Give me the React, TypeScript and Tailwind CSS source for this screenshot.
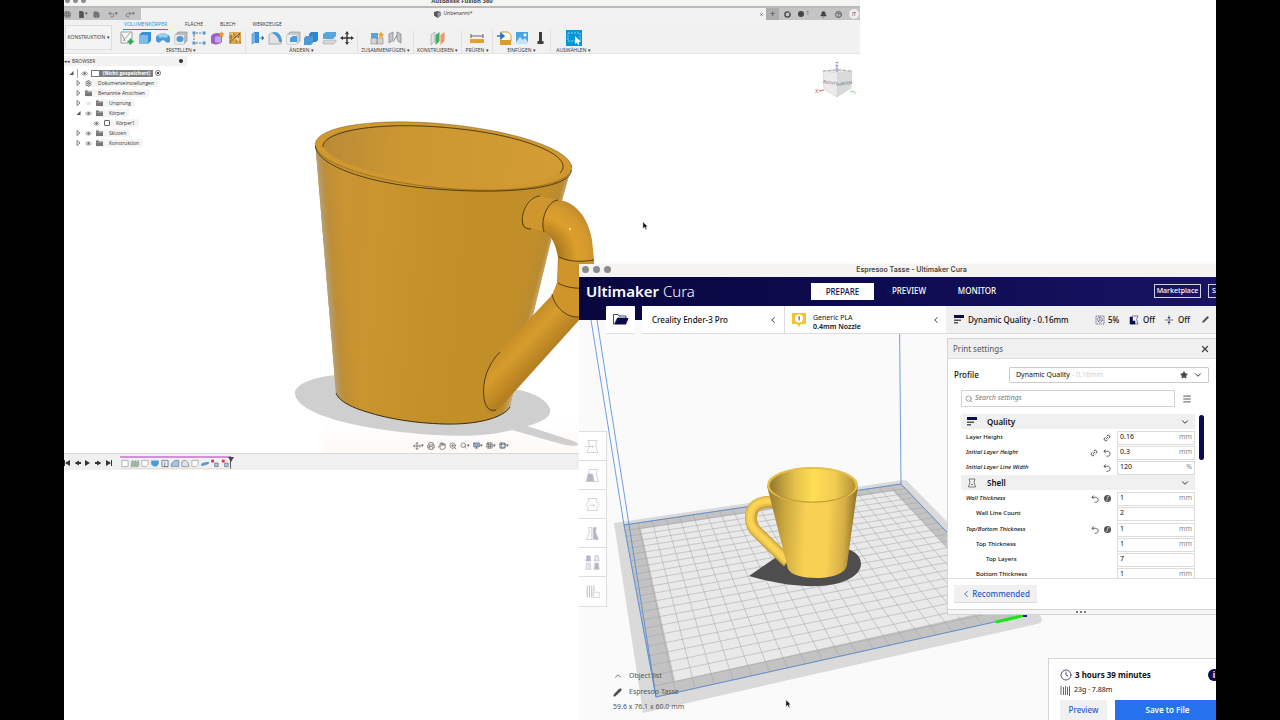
import type { FC, ReactNode } from 'react';
import {
    Bell, ChevronDown, ChevronLeft, ChevronUp, Clock, Grid3x3, Hand, HelpCircle, Link2, Menu, Monitor, Move,
    Pencil, Printer, Redo2, Save, Search, Settings, Star, Undo2, X, ZoomIn, Table2,
} from 'lucide-react';

/* ---------- shared ---------- */

const Cursor: FC = () => (
    <svg viewBox="0 0 8 11" className="w-[7px] h-[10px]">
        <path d="M1 .5v8l2-1.6 1.4 3 1.4-.7-1.4-2.8h2.4z" fill="#111" stroke="#fff" strokeWidth=".6" />
    </svg>
);

const TrafficLights: FC<{ size: string }> = ({ size }) => (
    <>
        <span className={`${size} rounded-full bg-[#8b8b8b]`} />
        <span className={`${size} rounded-full bg-[#8b8b8b]`} />
        <span className={`${size} rounded-full bg-[#8b8b8b]`} />
    </>
);

/* ---------- Fusion 360 ---------- */

const ToolIcon: FC<{ children: ReactNode; label: string }> = ({ children, label }) => (
    <button aria-label={label} className="w-[18px] h-[16px] flex items-center justify-center">
        <svg viewBox="0 0 16 16" className="w-[16px] h-[16px]" fill="none">{children}</svg>
    </button>
);

interface ToolGroup {
    label: string;
    width: string;
    tools: { name: string; art: ReactNode }[];
}

const toolGroups: ToolGroup[] = [
    {
        label: 'ERSTELLEN',
        width: 'w-[129px]',
        tools: [
            { name: 'Skizze', art: <><path d="M2 2h11v11H2z" fill="#f7f7f7" stroke="#888" strokeWidth=".8" /><path d="M4 11l7-8M3 4l3 7" stroke="#777" strokeWidth=".7" /><path d="M11.500 8.500v6M8.500 11.500h6" stroke="#22a84a" strokeWidth="2" /></> },
            { name: 'Extrusion', art: <><path d="M2 5l3-3h9v9l-3 3H2z" fill="#3d8fd1" /><path d="M2 5h9v9H2z" fill="#7fbbe8" /></> },
            { name: 'Drehen', art: <><path d="M1 8c0-6 14-6 14 0v4c-2 1-4 1-5-1-1-1-3-1-4 0-1 2-3 2-5 0z" fill="#4c9bd8" /><path d="M2 5c3-2 9-2 12 0l-3 3c-2-1-4-1-6 0z" fill="#9accee" /></> },
            { name: 'Bohrung', art: <><path d="M2 5l3-3h9v9l-3 3H2z" fill="#b9bdc2" stroke="#888" strokeWidth=".6" /><path d="M2 5h9v9H2z" fill="#e5e7e9" /><ellipse cx="7" cy="9" rx="3.500" ry="3" fill="#4c9bd8" /></> },
            { name: 'Muster', art: <><path d="M3 5v6m2 2h6M5 3h6" stroke="#555" strokeWidth=".8" strokeDasharray="2 1" /><path d="M1.500 1.500h3v3h-3zM11.500 1.500h3v3h-3zM1.500 11.500h3v3h-3zM11.500 11.500h3v3h-3z" fill="#4c9bd8" /></> },
            { name: 'Form', art: <><path d="M2 6c2-3 6-4 11-2v8c-3 3-8 3-11 1z" fill="#9b62d0" /><path d="M6 7c2-1 4-1 6 0v5c-2 1-4 1-6 0z" fill="#c7a3e8" /><path d="M12.500 1l1 2 2 .5-1.500 1.500.5 2-2-1-2 1 .5-2L9.500 3.500l2-.5z" fill="#f39a2b" /></> },
            { name: 'Netz', art: <><path d="M2 2h12v12H2z" fill="#dba954" /><path d="M2 8l4-5 3 4 4-4M3 13l5-6 6 6M6 3l-3 9M13 3l-4 10" stroke="#7a5118" strokeWidth=".7" /><path d="M8 8h4v4zM3 3h3v3z" fill="#f3d79d" /></> },
        ],
    },
    {
        label: 'ÄNDERN',
        width: 'w-[112px]',
        tools: [
            { name: 'Drücken/Ziehen', art: <><path d="M3 4l3-2v10l-3 2z" fill="#7fbbe8" stroke="#3d8fd1" strokeWidth=".6" /><path d="M6 2h4v11H6z" fill="#3d8fd1" /><path d="M10 8h3m0-2l2 2-2 2z" stroke="#3d8fd1" fill="#333" strokeWidth=".7" /></> },
            { name: 'Abrundung', art: <><path d="M2 14V5c3-4 9-3 12 5v4z" fill="#e1e3e5" stroke="#888" strokeWidth=".6" /><path d="M5 3c5-3 10 2 10 9h-3c0-4-3-7-7-9z" fill="#4c9bd8" /></> },
            { name: 'Schale', art: <><path d="M2 5l3-3h10v9l-3 3H2z" fill="#c8cbce" stroke="#888" strokeWidth=".6" /><path d="M2 5h10v9H2z" fill="#eceeef" /><path d="M5 8l3-2h4v6H5z" fill="#4c9bd8" /></> },
            { name: 'Kombinieren', art: <><path d="M6 4l2-2h7v8l-2 2H6z" fill="#2f86cc" /><path d="M1 8l2-2h7v7l-2 2H1z" fill="#4c9bd8" /></> },
            { name: 'Körper trennen', art: <><path d="M2 4l3-2h10v4l-3 3H2z" fill="#58a5de" /><path d="M2 11l3-1h10v2l-3 2H2z" fill="#d5d8da" stroke="#999" strokeWidth=".5" /></> },
            { name: 'Verschieben', art: <path d="M8 1l2 3H8.700v3.300H12V6l3 2-3 2V8.700H8.700V12H10l-2 3-2-3h1.300V8.700H4V10L1 8l3-2v1.300h3.300V4H6z" fill="#333" /> },
        ],
    },
    {
        label: 'ZUSAMMENFÜGEN',
        width: 'w-[56px]',
        tools: [
            { name: 'Neue Komponente', art: <><path d="M2 3h7v5H2z" fill="#58a5de" /><path d="M2 8h6v6H2zM8 8h6v6H8z" fill="#cfd3d6" stroke="#888" strokeWidth=".6" /><path d="M12 1l1 2.500 2.500.5-2 1.500.5 2.500-2-1-2 1 .5-2.500-2-1.500 2.500-.5z" fill="#f0a92c" /></> },
            { name: 'Verbindung', art: <><path d="M2 13V4l4-2v7l-1 2zM14 13V4l-4-2v7l1 2z" fill="#c3c7ca" stroke="#85898c" strokeWidth=".8" /><path d="M6 12l4-7" stroke="#777" strokeWidth=".8" /></> },
        ],
    },
    {
        label: 'KONSTRUIEREN',
        width: 'w-[48px]',
        tools: [{ name: 'Ebene', art: <><path d="M1 5l4-3v9l-4 4z" fill="#dfe2e3" stroke="#888" strokeWidth=".5" /><path d="M5.500 5l4-3v9l-4 4z" fill="#3fae62" /><path d="M10.500 5l4-3v9l-4 4z" fill="#ef9467" /></> }],
    },
    {
        label: 'PRÜFEN',
        width: 'w-[31px]',
        tools: [{ name: 'Messen', art: <><path d="M2 4v4M14 4v4M2 6h12" stroke="#444" strokeWidth=".8" /><path d="M1 9h14v4H1z" fill="#e3a22f" /></> }],
    },
    {
        label: 'EINFÜGEN',
        width: 'w-[58px]',
        tools: [
            { name: 'Ableiten', art: <><path d="M5 2h7l3 3v6H5z" fill="#fff" stroke="#d99b2c" /><path d="M4 10h11v5H4z" fill="#d99b2c" /><path d="M1 6h6M5 3.500L8 6 5 8.500z" stroke="#2678c0" fill="#2678c0" strokeWidth="1.500" /></> },
            { name: 'Bild', art: <><path d="M2 2h12v12H2z" fill="#4ba3e0" /><path d="M2 12l4-5 3 3 2-2 3 4v2H2z" fill="#c6e3f6" /><circle cx="11" cy="5" r="1.500" fill="#fff" /></> },
            { name: 'Schraube', art: <path d="M7 2h3v9h1.500v3h-6v-3H7z" fill="#3d3d3d" /> },
        ],
    },
    {
        label: 'AUSWÄHLEN',
        width: 'w-[45px]',
        tools: [{ name: 'Auswählen', art: <><path d="M0 0h16v16H0z" fill="#0696d7" /><path d="M2 3h12v8H2z" stroke="#a7e0f7" strokeDasharray="2 1" strokeWidth=".8" /><path d="M9 6v8l2-1.500 1 2.500 1.500-.7-1-2.300h2.500z" fill="#fff" /></> }],
    },
];

const Eye: FC<{ off?: boolean }> = ({ off }) => (
    <svg viewBox="0 0 12 8" className={`w-[7px] h-[5px] ${off ? 'opacity-20' : ''}`} fill="none">
        <path d="M.5 4C3 .500 9 .500 11.500 4 9 7.500 3 7.500.500 4z" stroke="#666" />
        <circle cx="6" cy="4" r="2" fill="#666" />
    </svg>
);

const Folder: FC = () => (
    <svg viewBox="0 0 14 12" className="w-[7px] h-[6px]">
        <path d="M0 1h5l1 2h8v9H0z" fill="#777" />
        <path d="M1 5h12" stroke="#bbb" />
    </svg>
);

const Arrow: FC<{ open?: boolean }> = ({ open }) => (
    <svg viewBox="0 0 10 10" className="w-[5px] h-[6px]">
        {open
            ? <path d="M9 1v8H1z" fill="#555" />
            : <path d="M2 0l6 5-6 5z" fill="#fff" stroke="#555" strokeWidth="1.500" />}
    </svg>
);

const treeItems = [
    { label: 'Dokumenteinstellungen', icon: 'gear' },
    { label: 'Benannte Ansichten', icon: 'folder' },
    { label: 'Ursprung', icon: 'folder', eye: 'off' },
    { label: 'Körper', icon: 'folder', eye: 'on', open: true },
    { label: 'Körper1', icon: 'body', eye: 'on', child: true },
    { label: 'Skizzen', icon: 'folder', eye: 'on' },
    { label: 'Konstruktion', icon: 'folder', eye: 'on' },
];

const BrowserTree: FC = () => (
    <div className="relative pt-[2px] text-[5px] leading-[10px] text-[#333]">
        <div className="w-[123px] h-[10px] bg-[#f2f2f2] flex items-center justify-between pr-1">
            <span className="flex items-center gap-[2px]"><span>◂◂</span>BROWSER</span>
            <span className="size-[4px] rounded-full bg-[#333]" />
        </div>
        <ul className="pt-[2px]">
            <li className="h-[10px] pl-[5px] flex items-center gap-[3px]">
                <Arrow open />
                <span className="w-px h-[9px] bg-[#d58bd8]" />
                <Eye />
                <span className="h-[7px] flex">
                    <span className="w-[9px] h-[7px] bg-white border border-[#777]" />
                    <b className="w-[53px] bg-[#7f7f7f] text-white text-center leading-[7px] whitespace-nowrap">(Nicht gespeichert)</b>
                    <span className="ml-[2px] size-[6px] rounded-full border border-[#777] bg-[radial-gradient(#444_30%,white_40%)]" />
                </span>
            </li>
            {treeItems.map((item) => (
                <li key={item.label} className={`h-[10px] flex items-center gap-[4px] ${item.child ? 'pl-[29px]' : 'pl-[12px]'}`}>
                    {!item.child && <Arrow open={item.open} />}
                    {item.eye && <Eye off={item.eye === 'off'} />}
                    <span className="bg-[#f5f5f5] h-[8px] pr-[4px] flex items-center gap-[6px]">
                        {item.icon === 'folder' && <Folder />}
                        {item.icon === 'gear' && <Settings className="size-[7px]" />}
                        {item.icon === 'body' && <span className="size-[6px] rounded-[1px] border border-[#666] bg-white" />}
                        {item.label}
                    </span>
                </li>
            ))}
        </ul>
    </div>
);

const MUG_BODY = 'M315.500 146L336 393c2 7 14 14 31 19 22 7 48 11 76 12 34 1 60-6 67-17l3-14 20-78 20-83 19-67z';

const BigMug: FC = () => (
    <svg viewBox="64 54 796 399" className="absolute left-0 top-0 w-[796px] h-[399px]" fill="none">
        <defs>
            <linearGradient id="mugBody" x1="325" x2="562" y1="280" y2="300" gradientUnits="userSpaceOnUse">
                <stop offset="0" stopColor="#c99432" />
                <stop offset=".2" stopColor="#ca952f" />
                <stop offset=".5" stopColor="#c28f28" />
                <stop offset="1" stopColor="#c08d29" />
            </linearGradient>
            {/* light falling off along the two slanted sides */}
            <linearGradient id="mugLeft" x1="326" x2="350" y1="272" y2="270" gradientUnits="userSpaceOnUse">
                <stop offset="0" stopColor="#b3a07a" />
                <stop offset=".3" stopColor="#b78c3c" stopOpacity=".7" />
                <stop offset="1" stopColor="#c08c30" stopOpacity="0" />
            </linearGradient>
            <linearGradient id="mugRight" x1="543" x2="524" y1="284" y2="279" gradientUnits="userSpaceOnUse">
                <stop offset="0" stopColor="#cdb588" />
                <stop offset=".35" stopColor="#b98a33" stopOpacity=".8" />
                <stop offset="1" stopColor="#b98a33" stopOpacity="0" />
            </linearGradient>
            <linearGradient id="mugInside" x1="323" x2="563" y1="0" y2="0" gradientUnits="userSpaceOnUse">
                <stop offset="0" stopColor="#b98a38" />
                <stop offset=".3" stopColor="#cb9631" />
                <stop offset="1" stopColor="#d39d33" />
            </linearGradient>
            <linearGradient id="mugArm" x1="512" x2="540" y1="335" y2="362" gradientUnits="userSpaceOnUse">
                <stop offset="0" stopColor="#c48d27" />
                <stop offset=".4" stopColor="#d79c2c" />
                <stop offset="1" stopColor="#b47f21" />
            </linearGradient>
            <radialGradient id="mugBend" cx="537" cy="256" r="62" gradientUnits="userSpaceOnUse">
                <stop offset=".35" stopColor="#ae7a1f" />
                <stop offset=".65" stopColor="#dc9f2b" />
                <stop offset=".85" stopColor="#d3992f" />
                <stop offset="1" stopColor="#c08a2b" />
            </radialGradient>
            <linearGradient id="mugFloor" x1="0" x2="0" y1="420" y2="453" gradientUnits="userSpaceOnUse">
                <stop offset="0" stopColor="#fff" />
                <stop offset="1" stopColor="#fdf9f6" />
            </linearGradient>
        </defs>
        <path d="M324 420h254v33H324z" fill="url(#mugFloor)" />
        <path d="M336 375c-22 2-42 9-41 19 2 20 62 36 140 41 32 2 58 0 77-5l42 12c10 3 22 5 24 3 1-3-11-6-20-9l-31-10c16-4 25-10 23-17-3-10-20-18-37-20z" fill="#cfcfcf" />
        {/* body */}
        <path d={MUG_BODY} fill="url(#mugBody)" />
        <path d={MUG_BODY} fill="url(#mugLeft)" />
        <path d={MUG_BODY} fill="url(#mugRight)" />
        <path d="M336 393c2 7 14 14 31 19 22 7 48 11 76 12 34 1 60-6 67-17" stroke="#3a2c10" />
        <ellipse cx="443.500" cy="156" rx="128.800" ry="32" transform="rotate(5.500 443.500 156)" fill="#d0982f" stroke="#5a4415" strokeWidth=".4" />
        <path d="M315.300 146c2 20 54 38 120 43 76 6 136-1 136-19" stroke="#44330f" strokeWidth=".9" />
        <ellipse cx="443.500" cy="155.500" rx="120.500" ry="28" transform="rotate(5.500 443.500 155.500)" fill="url(#mugInside)" />
        <path d="M323 147c-1-15 50-25 116-20 72 5 124 24 124 39 0 3-1 5-3 7" stroke="#44330f" strokeWidth=".9" />
        {/* handle */}
        <path d="M540 196l18 4c16 1 30 16 34 40l2 20v45l-10 14-20-2-12-22 5-12 1-25c-2-13-6-21-12-25l-20-6c-8-8-2-31 14-31z" fill="url(#mugBend)" />
        <path d="M540 196l18 4c-11 3-16 18-14 32l-18-5c-7-8-2-31 14-31z" fill="#cf962e" />
        <path d="M559 258c10 4 22 5 35 3v44l-13 13c-14 0-26-10-29-21l5-14z" fill="#cf952b" />
        <path d="M552 295c3 12 15 23 29 23l-82 91c-4 4-9 4-12 1-6-10-5-26 1-42 4-9 9-15 15-21z" fill="url(#mugArm)" />
        <circle cx="570" cy="229" r="1" fill="#ffe6a8" />
        <path d="M540 196c-13 1-20 19-17 29 1 3 5 4 8 4M558 200c-11 1-18 21-14 32M559 257c10 5 23 5 35 3M558 283c8 5 20 6 35 5M552 294c2 12 14 24 27 23M500 352c-13 13-18 30-16 46 1 8 5 14 12 12" stroke="#44330f" strokeWidth=".9" />
    </svg>
);

const ViewCube: FC = () => (
    <svg viewBox="812 58 48 46" className="absolute left-[748px] top-[4px] w-[48px] h-[46px]" fontSize="4">
        <path d="M823 71l14-3 15 3-1 17-14 9-13-8z" fill="#e6e6e6" />
        <path d="M823 71l15 2-1 24-13-8z" fill="#ebebeb" stroke="#ccc" strokeWidth=".5" />
        <path d="M838 73l14-2-1 17-14 9z" fill="#dadada" stroke="#ccc" strokeWidth=".5" />
        <path d="M823 71l14-1 15 1" stroke="#888" strokeDasharray="3 2" strokeWidth=".7" fill="none" />
        <g fill="#555">
            <text x="823" y="83" transform="rotate(9 823 83)">RECHTS</text>
            <text x="838" y="86" transform="rotate(-9 838 86)">HINTEN</text>
        </g>
        <path d="M837 66v6" stroke="#7777e0" />
        <path d="M819 91l5-1" stroke="#e06666" />
        <path d="M850 91l4 1" stroke="#8fd49a" />
        <text x="835" y="66" fill="#6666dd" fontSize="6">Z</text>
        <text x="815" y="93" fill="#e04444" fontSize="6">X</text>
        <text x="853" y="95" fill="#8fd49a" fontSize="6">Y</text>
    </svg>
);

const timelineSteps: ReactNode[] = [
    <path key="0" d="M2 2h9v9H2z" fill="#fff" stroke="#999" />,
    <path key="1" d="M1 4l3-2v8l-3 2zM5 4l3-2v8l-3 2zM9 4l3-2v8l-3 2z" fill="#9fc79f" stroke="#777" strokeWidth=".6" />,
    <path key="2" d="M2 2h9v6l-3 3H2z" fill="#fff" stroke="#999" />,
    <path key="3" d="M1 2h11v5L9 11H5L1 8z" fill="#4c9bd8" />,
    <path key="4" d="M2 2h9v9H2zM6 5v6h5" fill="#dbeaf5" stroke="#667" />,
    <path key="5" d="M1 11V7l5-5h6v9z" fill="#9fc6e4" stroke="#778" />,
    <path key="6" d="M2 11V4l3-2c4 0 7 3 7 9z" fill="#dfe3e6" stroke="#778" />,
    <path key="7" d="M2 2h9v6l-3 3H2z" fill="#fff" stroke="#999" />,
    <path key="8" d="M1 7l4-2 7-1v3l-5 2-6 1z" fill="#4c9bd8" />,
    <g key="9"><path d="M6 6h5v5H6z" fill="#a8cbe6" stroke="#667" /><path d="M1 1h4v4H1z" fill="#d4334e" /></g>,
    <g key="10"><path d="M6 6h5v5H6z" fill="#a8cbe6" stroke="#667" /><path d="M2 1h4v4H2z" fill="#d4334e" /></g>,
];

const FusionWindow: FC = () => (
    <section className="absolute left-0 -top-[6px] w-[796px] font-['Open_Sans','Noto_Sans',sans-serif] text-[5px] text-[#333]">
        <header className="h-[12px] bg-[#f5f4f2] px-[1px] grid grid-cols-[1fr_auto_1fr] items-center">
            <div className="flex gap-[3px]"><TrafficLights size="size-[5px]" /></div>
            <h1 className="text-[6px] leading-[10px] pt-[2px] font-bold text-[#444]">Autodesk Fusion 360</h1>
        </header>

        {/* Document tabs */}
        <div className="h-[14px] border-t-2 border-[#b9bbba] bg-[#c3c4c3] flex">
            <div className="w-[77px] flex items-center gap-[5px] text-[#555]">
                <Grid3x3 className="size-[7px]" />
                <span className="flex items-center ml-[2px]"><svg viewBox="0 0 8 9" className="size-[7px]"><path d="M1 0h4l2 2v7H1z" fill="#555" /></svg>▾</span>
                <Save className="size-[7px] fill-[#888]" />
                <span className="flex items-center ml-[3px]"><Undo2 className="size-[7px]" />▾</span>
                <span className="flex items-center ml-[2px]"><Redo2 className="size-[7px]" />▾</span>
            </div>
            <div className="w-[625px] bg-[#f2f2f2] grid grid-cols-[1fr_auto_1fr] items-center">
                <span />
                <span className="flex items-center gap-[2px]">
                    <svg viewBox="0 0 8 8" className="size-[7px]"><path d="M0 1l4-1 4 1v4L4 8 0 5z" fill="#555" /><path d="M4 2l4-1v4L4 8z" fill="#999" /></svg>
                    Unbenannt*
                </span>
                <button aria-label="Schließen" className="justify-self-end mr-[2px]"><X className="size-[5px]" /></button>
            </div>
            <div className="flex-1 flex items-center text-[#444]">
                <span className="w-[13px] self-stretch bg-[#acadac] text-[9px] leading-[11px] text-center">+</span>
                <div className="flex-1 flex items-center justify-between pl-[5px] pr-[1px]">
                    <svg viewBox="0 0 8 8" className="size-[7px]" fill="none"><circle cx="4" cy="4" r="3" stroke="#444" strokeWidth="1.500" /><path d="M4 4l3-3" stroke="#c3c4c3" /></svg>
                    <span className="flex items-center gap-[2px]"><span className="size-[6px] rounded-full bg-[#444]" />1</span>
                    <Bell className="size-[7px] ml-[4px] fill-[#444]" />
                    <HelpCircle className="size-[7px]" strokeWidth={3} />
                    <span className="size-[10px] rounded-full bg-[#eee] text-center leading-[10px]">IT</span>
                </div>
            </div>
        </div>

        {/* Toolbar */}
        <div className="h-[34px] bg-[#f1f1f1] border-b border-[#e4e4e4] flex">
            <button className="w-[47px] h-[25px] ml-px mt-[5px] border border-[#ddd] bg-[#f4f4f4]">KONSTRUKTION ▾</button>
            <div className="flex-1 pl-[5px]">
                <nav className="h-[10px] flex gap-[17px] pl-[6px] leading-[9px]">
                    <a href="#volumen" className="text-[#0696d7] border-b border-[#0696d7] px-[1px]">VOLUMENKÖRPER</a>
                    <a href="#flaeche">FLÄCHE</a>
                    <a href="#blech">BLECH</a>
                    <a href="#werkzeuge">WERKZEUGE</a>
                </nav>
                <div className="flex">
                    {toolGroups.map((group) => (
                        <div key={group.label} className={`${group.width} h-[23px] shrink-0 flex flex-col items-center border-r border-[#e2e2e2] last:border-0`}>
                            <div className="flex">
                                {group.tools.map((tool) => <ToolIcon key={tool.name} label={tool.name}>{tool.art}</ToolIcon>)}
                            </div>
                            <span className="leading-[8px] whitespace-nowrap">{group.label} ▾</span>
                        </div>
                    ))}
                </div>
            </div>
        </div>

        {/* Canvas */}
        <div className="relative h-[399px] bg-white">
            <BigMug />
            <BrowserTree />
            <ViewCube />
            <div className="absolute left-[349px] bottom-[3px] h-[9px] flex items-center gap-[3px] text-[#555]">
                <span className="flex items-center"><Move className="size-[8px]" />▾</span>
                <Printer className="size-[8px]" />
                <Hand className="size-[8px]" />
                <ZoomIn className="size-[8px]" />
                <span className="flex items-center"><Search className="size-[7px]" />▾</span>
                <span className="flex items-center"><Monitor className="size-[7px] fill-[#8fb2d6]" />▾</span>
                <span className="flex items-center"><Grid3x3 className="size-[7px]" />▾</span>
                <span className="flex items-center"><Table2 className="size-[7px] fill-[#8fb2d6]" />▾</span>
            </div>
        </div>

        {/* Timeline */}
        <footer className="h-[17px] bg-[#f0f0f0] border-t border-[#d8d8d8] flex">
            <svg viewBox="0 0 50 10" className="w-[50px] h-[10px] mt-[4px] shrink-0" fill="#333">
                <path d="M0 2h1v6H0zM6 2v6L1 5zM15 2.500v5L10.500 5zM15 4h2v2h-2zM21 2l5 3-5 3zM31 4h2v2h-2zM33 2.500L37.500 5 33 7.500zM42 2l5 3-5 3zM47 2h1v6h-1z" />
            </svg>
            <div className="ml-[6px] mt-[2px] h-[13px] border-t-2 border-[#d48fdc] flex items-center border-r border-r-[#555] border-b border-b-[#e6dfd3]">
                {timelineSteps.map((step, i) => (
                    <svg key={i} viewBox="0 0 13 13" className="w-[10px] h-[9px]" fill="none">{step}</svg>
                ))}
            </div>
            <svg viewBox="0 0 6 6" className="size-[6px] mt-[2px] -ml-[3px]"><path d="M0 1h6L3 6z" fill="#444" /></svg>
        </footer>
    </section>
);

/* ---------- Cura ---------- */

type Point = [number, number];

// build plate corners on screen: back left, back right, front right, front left
const PLATE: Point[] = [[624, 525], [901, 484], [1026, 615], [656, 697]];
const CELLS = 22;

// maps a unit-square position onto the plate in perspective
const project = (u: number, v: number): string => {
    const [[x0, y0], [x1, y1], [x2, y2], [x3, y3]] = PLATE;
    const sx = x0 - x1 + x2 - x3;
    const sy = y0 - y1 + y2 - y3;
    const dx1 = x1 - x2, dx2 = x3 - x2, dy1 = y1 - y2, dy2 = y3 - y2;
    const det = dx1 * dy2 - dx2 * dy1;
    const g = (sx * dy2 - dx2 * sy) / det;
    const h = (dx1 * sy - sx * dy1) / det;
    const w = g * u + h * v + 1;
    const x = ((x1 - x0 + g * x1) * u + (x3 - x0 + h * x3) * v + x0) / w;
    const y = ((y1 - y0 + g * y1) * u + (y3 - y0 + h * y3) * v + y0) / w;
    return `${x.toFixed(1)} ${y.toFixed(1)}`;
};

const gridPath = Array.from({ length: CELLS + 1 }, (_, i) => i / CELLS)
    .map((t) => `M${project(t, 0)}L${project(t, 1)}M${project(0, t)}L${project(1, t)}`)
    .join('');

const BuildPlate: FC = () => (
    <svg viewBox="579 320 665 400" className="absolute left-0 top-[14px] w-[665px] h-[400px]" fill="none">
        <defs>
            <linearGradient id="cupBody" x1="772" x2="857" y1="520" y2="524" gradientUnits="userSpaceOnUse">
                <stop offset="0" stopColor="#a58633" />
                <stop offset=".15" stopColor="#cda941" />
                <stop offset=".4" stopColor="#f8d154" />
                <stop offset=".65" stopColor="#f8d154" />
                <stop offset=".85" stopColor="#d5ae45" />
                <stop offset="1" stopColor="#846a25" />
            </linearGradient>
            <linearGradient id="cupInside" x1="768" x2="858" y1="0" y2="0" gradientUnits="userSpaceOnUse">
                <stop offset="0" stopColor="#8d732c" />
                <stop offset=".3" stopColor="#e6c14c" />
                <stop offset=".5" stopColor="#ffdf55" />
                <stop offset=".75" stopColor="#f0cb50" />
                <stop offset="1" stopColor="#a98834" />
            </linearGradient>
        </defs>
        <path d="M579 320h665v400H579z" fill="#fafafa" />
        <path d="M614 523l289-43q4 0 6 3l132 134q3 5-4 7L643 713z" fill="#dadada" />
        <path d="M624 525l277-41 125 131-370 82z" fill="#c3c3c3" />
        <path d="M641 529l252-38 111 117-329 73z" fill="#e9e9e9" />
        <path d={gridPath} stroke="#a3a3a3" strokeWidth=".5" />
        <path d="M624 525l277-41 125 131-370 82zM591 320l33 205M597 320l59 377M899.500 320l1.500 164" stroke="#4a86d8" strokeWidth=".8" />
        <path d="M996 622l30-7" stroke="#19e619" strokeWidth="3" />
        <path d="M1023 613h4v4h-4z" fill="#1a1ab0" />
        <path d="M749 576l26-18 70-10c10 3 16 8 16 16 0 11-16 21-43 22-22 1-50-4-69-10z" fill="#4e4e4e" />
        {/* handle */}
        <path d="M774 502h-8q-15 2-15 16 0 9 7 15l30 29" stroke="#cba540" strokeWidth="12" />
        <path d="M774 501h-8q-16 2-16 17 0 8 7 14l30 29" stroke="#e9c34e" strokeWidth="9" />
        <path d="M774 501h-8q-16 2-16 17 0 8 7 14l30 29" stroke="#fbd455" strokeWidth="5" />
        <path d="M767 486l21 83c3 6 15 9 29 9 16 0 29-5 30-13l11-80z" fill="url(#cupBody)" />
        <ellipse cx="812.500" cy="485" rx="45.500" ry="18" fill="#e6bf49" />
        <ellipse cx="812.500" cy="485.500" rx="43" ry="16.500" fill="url(#cupInside)" />
        <path d="M770 487c4 9 21 15 43 15s39-6 42-15" stroke="#a88731" strokeWidth=".7" />
    </svg>
);

const hourglass = 'M4 2h12l-2 6 3 10H3L6 8z';

const modelTools: { name: string; art: ReactNode }[] = [
    { name: 'Move', art: <><path d={hourglass} /><path d="M1 10h10M9 8l2 2-2 2" /></> },
    { name: 'Scale', art: <><path d="M5 8V2h12l-2 6 3 10h-6" /><path d="M4 8h6l2 10H2z" fill="#b5b5c4" /></> },
    { name: 'Rotate', art: <><path d="M4 2h12l-1 4 4 4-4 4 2 4H3l2-4-4-4 4-4z" /><path d="M6 11h7M11 9l2 2-2 2" /></> },
    { name: 'Mirror', art: <><path d="M9 2H5l1 6-4 10h7z" /><path d="M11 2h4l-1 6 4 10h-7z" fill="#b5b5c4" /></> },
    { name: 'Mesh type', art: <><path d="M2 1h5v3l1 4H1l1-4zM13 11h5v3l1 5h-7l1-5z" fill="#b5b5c4" /><path d="M13 1h5v3l1 4h-7l1-4zM2 11h5v3l1 5H1l1-5z" fill="#e6e6ec" /></> },
    { name: 'Support blocker', art: <><path d="M3 2v16M6 2v16M9 2v16M12 2v8" strokeWidth="1.500" /><path d="M11 11h8v7h-8z" fill="#fff" /></> },
];

const Bars: FC = () => (
    <svg viewBox="0 0 20 18" className="w-[10px] h-[9px] shrink-0">
        <path d="M0 0h20v6H0z" fill="#0b0b4e" />
        <path d="M0 9h14v3H0zM0 14h8v3H0z" fill="#555" />
    </svg>
);

type RowIcon = 'link' | 'reset' | 'fx';

interface Setting {
    label: string;
    value: string;
    unit?: string;
    icons?: RowIcon[];
    changed?: boolean;
    depth?: number;
}

const sections: { title: string; groups: Setting[][] }[] = [
    {
        title: 'Quality',
        groups: [
            [
                { label: 'Layer Height', value: '0.16', unit: 'mm', icons: ['link'] },
                { label: 'Initial Layer Height', value: '0.3', unit: 'mm', icons: ['link', 'reset'], changed: true },
                { label: 'Initial Layer Line Width', value: '120', unit: '%', icons: ['reset'], changed: true },
            ],
        ],
    },
    {
        title: 'Shell',
        groups: [
            [
                { label: 'Wall Thickness', value: '1', unit: 'mm', icons: ['reset', 'fx'], changed: true },
                { label: 'Wall Line Count', value: '2', depth: 1 },
            ],
            [
                { label: 'Top/Bottom Thickness', value: '1', unit: 'mm', icons: ['reset', 'fx'], changed: true },
                { label: 'Top Thickness', value: '1', unit: 'mm', depth: 1 },
                { label: 'Top Layers', value: '7', depth: 2 },
                { label: 'Bottom Thickness', value: '1', unit: 'mm', depth: 1 },
            ],
        ],
    },
];

const indent = ['pl-[5px]', 'pl-[15px]', 'pl-[25px]'];

const SettingRow: FC<{ setting: Setting }> = ({ setting }) => {
    const id = setting.label.toLowerCase().replace(/[^a-z]+/g, '-');
    return (
        <div className={`h-[15px] flex items-center ${indent[setting.depth ?? 0]}`}>
            <label htmlFor={id} className={`flex-1 whitespace-nowrap font-medium ${setting.changed ? 'italic' : ''}`}>{setting.label}</label>
            <span className="flex gap-[5px] mr-[6px] text-[#444]">
                {setting.icons?.map((icon) => {
                    if (icon === 'link') return <Link2 key={icon} className="size-[8px] -rotate-45" strokeWidth={2.5} />;
                    if (icon === 'reset') {
                        return (
                            <svg key={icon} viewBox="0 0 16 16" className="size-[8px]" fill="none" stroke="currentColor" strokeWidth="1.700">
                                <path d="M5 1L2 4.500 5 8M2 4.500h7c7 0 7 10 0 10H7" />
                            </svg>
                        );
                    }
                    return <span key={icon} className="size-[7px] rounded-full bg-[#555] text-white text-[5px] leading-[7px] text-center italic">f</span>;
                })}
            </span>
            <span className="w-[78px] h-[14px] border border-[#dcdcdc] bg-white flex items-center px-[2px] text-[7px]">
                <input id={id} defaultValue={setting.value} className="w-0 flex-1 bg-transparent outline-none" />
                <span className="text-[#8a8a8a]">{setting.unit}</span>
            </span>
        </div>
    );
};

const PrintSettings: FC = () => (
    <aside className="absolute left-[368px] top-[32px] w-[273px] border border-[#d4d4d4] bg-white text-[7px] text-[#111]">
        <header className="h-[20px] bg-[#f0f0f0] border-b border-[#dcdcdc] flex items-center justify-between pl-[5px] pr-[9px]">
            <h2 className="text-[8px] text-[#555]">Print settings</h2>
            <button aria-label="Close"><X className="size-[10px] text-[#444]" strokeWidth={3} /></button>
        </header>

        <div className="h-[31px] pt-px flex items-center pl-[6px] pr-[10px]">
            <label htmlFor="profile" className="w-[55px] text-[8px] font-medium">Profile</label>
            <div className="flex-1 h-[16px] border border-[#ccc] rounded-[1px] flex items-center gap-[2px] pl-[6px] pr-[5px]">
                <select id="profile" className="appearance-none bg-transparent w-[54px]"><option>Dynamic Quality</option></select>
                <span className="flex-1 text-[#d0d0d0]">- 0.16mm</span>
                <Star className="size-[8px] fill-[#444] text-[#444]" />
                <ChevronDown className="size-[10px] ml-[3px]" />
            </div>
        </div>

        <div className="flex items-center pl-[13px] pb-[7px]">
            <label className="w-[214px] h-[17px] border border-[#d4d4d4] flex items-center gap-[2px] pl-[3px]">
                <Search className="size-[8px] text-[#777]" />
                <input aria-label="Search settings" placeholder="Search settings" className="flex-1 outline-none italic placeholder:text-[#777]" />
            </label>
            <button aria-label="Visibility" className="ml-[7px]"><Menu className="size-[10px] text-[#333]" strokeWidth={2} /></button>
        </div>

        <div className="h-[164px] overflow-hidden flex pl-[13px]">
            <div className="w-[234px] text-[6px]">
                {sections.map((section) => (
                    <div key={section.title}>
                        <button className="w-full h-[15px] mb-px bg-[#f0f0f0] flex items-center pl-[6px] pr-[5px] text-[8px] font-semibold text-left">
                            {section.title === 'Quality'
                                ? <Bars />
                                : <svg viewBox="0 0 20 20" className="size-[10px]" fill="none" stroke="#555" strokeWidth="1.500"><path d={hourglass} /><path d="M8 13h4" /></svg>}
                            <span className="flex-1 pl-[10px]">{section.title}</span>
                            <ChevronDown className="size-[10px]" />
                        </button>
                        <div className="flex flex-col gap-px">
                            {section.groups.map((group) => (
                                <div key={group[0].label}>
                                    {group.map((setting) => <SettingRow key={setting.label} setting={setting} />)}
                                </div>
                            ))}
                        </div>
                    </div>
                ))}
            </div>
            <span className="ml-[4px] mt-px w-[5px] h-[45px] rounded-full bg-[#0b0b4e]" />
        </div>

        <div className="h-[31px] border-t border-[#dcdcdc] flex items-center pl-[6px]">
            <button className="w-[83px] h-[18px] bg-[#f0f0f0] border-b border-[#dcdcdc] text-[#1c5fc4] text-[8px] font-medium flex items-center justify-center gap-px">
                <ChevronLeft className="size-[10px]" />Recommended
            </button>
        </div>
        <div className="h-[5px] bg-[#f5f5f5] border-t border-[#d4d4d4] flex items-center justify-center gap-[2px] pr-[5px]">
            <span className="size-[2px] rounded-full bg-[#555]" />
            <span className="size-[2px] rounded-full bg-[#555]" />
            <span className="size-[2px] rounded-full bg-[#555]" />
        </div>
    </aside>
);

const StageBar: FC = () => (
    <div className="relative h-[28px] pl-[27px] flex text-[#111]">
        <button aria-label="Open file" className="w-[29px] mr-[7px] bg-white border-b border-[#e2e2e2] flex items-center justify-center rounded-[1px]">
            <svg viewBox="0 0 32 22" className="w-[16px] h-[11px]">
                <path d="M1 1h9l2 3h14v4H9L3 20H1z" fill="#fff" stroke="#0b0b4e" strokeWidth="1.500" />
                <path d="M9 8h22l-5 13H3z" fill="#0b0b4e" />
            </svg>
        </button>
        <button className="w-[143px] bg-white border-b border-r border-[#dcdcdc] flex items-center justify-between pl-[10px] pr-[6px] text-[8px] font-medium">
            Creality Ender-3 Pro<ChevronLeft className="size-[10px]" />
        </button>
        <button className="w-[161px] bg-white border-b border-[#dcdcdc] flex items-center pl-[7px] pr-[5px] text-left text-[7px] leading-[9px]">
            <svg viewBox="0 0 14 14" className="size-[14px]">
                <path d="M0 0h14v11h-5l-2 3-2-3H0z" fill="#f2c62e" />
                <circle cx="7" cy="5.500" r="4" fill="#fff" />
                <path d="M6.300 4.300L7.200 3.500v4" stroke="#333" strokeWidth=".8" fill="none" />
            </svg>
            <span className="flex-1 pl-[7px] pt-[4px]">Generic PLA<br /><b className="font-semibold">0.4mm Nozzle</b></span>
            <ChevronLeft className="size-[10px]" />
        </button>
        <button className="w-[274px] bg-[#f0f0f0] border-b border-[#dcdcdc] flex items-center pl-[8px] text-[8px] font-medium text-left whitespace-nowrap">
            <Bars />
            <span className="w-[131px] pl-[4px]">Dynamic Quality - 0.16mm</span>
            <svg viewBox="0 0 20 20" className="size-[10px]" fill="none" stroke="#0b0b4e"><path d="M2 2h16v16H2z" strokeDasharray="3 1" /><path d="M5 7l4-3 5 2 1 5-4 4-5-2zM9 4l1 6 5 1M6 13l4-3" strokeWidth=".8" /></svg>
            <span className="w-[24px] pl-[3px]">5%</span>
            <svg viewBox="0 0 20 20" className="size-[10px]" fill="none" stroke="#0b0b4e"><path d="M6 2h12l-3 7 3 9H2" /><path d="M2 4h5v8h5v6H2z" fill="#0b0b4e" /></svg>
            <span className="w-[25px] pl-[4px]">Off</span>
            <svg viewBox="0 0 20 20" className="size-[10px]" stroke="#333366" strokeWidth="1.500"><path d="M2 10h16M10 1v6M10 13v6" /><path d="M8 5l2 2 2-2zM8 15l2-2 2 2z" fill="#333366" /></svg>
            <span className="w-[28px] pl-[4px]">Off</span>
            <Pencil className="size-[7px] fill-[#555] text-[#555]" />
        </button>
    </div>
);

const CuraWindow: FC = () => (
    <section className="absolute left-[515px] top-[264px] -right-[28px] bottom-0 flex flex-col font-['Noto_Sans','Open_Sans',sans-serif]">
        <header className="h-[13px] shrink-0 pb-[2px] bg-[#f5f4f2] grid grid-cols-[1fr_auto_1fr] items-center px-[3px] shadow-sm">
            <div className="flex gap-[4px]"><TrafficLights size="size-[7px]" /></div>
            <h1 className="font-['Inter',sans-serif] text-[7px] leading-[10px] font-semibold text-[#444]">Espresoo Tasse - Ultimaker Cura</h1>
        </header>

        <div className="h-[43px] shrink-0 bg-[linear-gradient(90deg,#08073f,#0e0c52_50%,#1a1464)] text-white">
            <div className="h-[28px] pl-[7px] flex items-center">
                <p className="w-[225px] text-[15px] leading-[20px] font-light"><b className="font-semibold">Ultimaker</b> Cura</p>
                <nav className="flex items-center gap-[16px] text-[8px] font-medium">
                    <a href="#prepare" className="w-[63px] h-[17px] leading-[17px] bg-white text-[#0b0b4e] text-center">PREPARE</a>
                    <a href="#preview" className="w-[38px] text-center">PREVIEW</a>
                    <a href="#monitor" className="w-[66px] text-center">MONITOR</a>
                </nav>
                <div className="ml-auto flex gap-[7px] mr-[4px] text-[7px] font-medium">
                    <button className="w-[47px] h-[14px] border border-white/80 leading-[12px]">Marketplace</button>
                    <button className="w-[32px] h-[14px] border border-white/80 leading-[12px] text-left pl-[3px]">Sign in</button>
                </div>
            </div>
        </div>

        <main className="relative flex-1 -mt-[14px]">
            <BuildPlate />
            <StageBar />
            <PrintSettings />

            {/* Model tools */}
            <div className="absolute left-0 top-[125px] w-[28px] bg-white border border-l-0 border-[#dedede] divide-y divide-[#dedede]">
                {modelTools.map((tool) => (
                    <button key={tool.name} aria-label={tool.name} className="w-full h-[29px] flex items-center justify-center">
                        <svg viewBox="0 0 20 20" className="size-[15px]" fill="none" stroke="#c4c4cf">{tool.art}</svg>
                    </button>
                ))}
            </div>

            {/* Object list */}
            <div className="absolute left-[34px] bottom-[7px] text-[7px] leading-[12px] text-[#555]">
                <button className="flex items-center gap-[6px] mb-[4px]"><ChevronUp className="size-[10px]" />Object list</button>
                <p className="flex items-center gap-[7px] mb-[3px]"><Pencil className="size-[9px] fill-[#444]" />Espresoo Tasse</p>
                <p>59.6 x 76.1 x 60.0 mm</p>
            </div>

            {/* Slice result */}
            <div className="absolute left-[469px] bottom-0 w-[184px] h-[62px] bg-white border border-b-0 border-[#d4d4d4] px-[11px] pt-[9px]">
                <div className="flex items-center gap-[3px] h-[13px]">
                    <Clock className="size-[12px] text-[#222247]" strokeWidth={1.5} />
                    <strong className="flex-1 text-[8px] font-bold text-[#111]">3 hours 39 minutes</strong>
                    <span className="size-[12px] rounded-full bg-[#0b0b4e] text-white text-[8px] leading-[12px] font-bold text-center">i</span>
                </div>
                <div className="flex items-center gap-[4px] h-[18px] pt-px text-[7px] text-[#111]">
                    <svg viewBox="0 0 10 10" className="size-[10px]" stroke="#222247"><path d="M1 0v9M3.500 1v8M5.500 0v9M7.500 1v8M9.500 0v10" strokeWidth=".7" /></svg>
                    23g · 7.88m
                </div>
                <div className="flex gap-[8px] mt-px text-[8px] font-semibold">
                    <button className="w-[47px] h-[20px] bg-[#f0f0f0] text-[#1c5fc4] font-medium">Preview</button>
                    <button className="flex-1 h-[20px] bg-[#2672ee] text-white">Save to File</button>
                </div>
            </div>
        </main>
    </section>
);

const App: FC = () => (
    <div className="h-screen bg-black px-16">
        <div className="relative h-full bg-white overflow-hidden">
            <FusionWindow />
            <CuraWindow />
            <div className="absolute left-[578px] top-[221px]"><Cursor /></div>
            <div className="absolute left-[721px] top-[699px]"><Cursor /></div>
        </div>
    </div>
);

export default App;
